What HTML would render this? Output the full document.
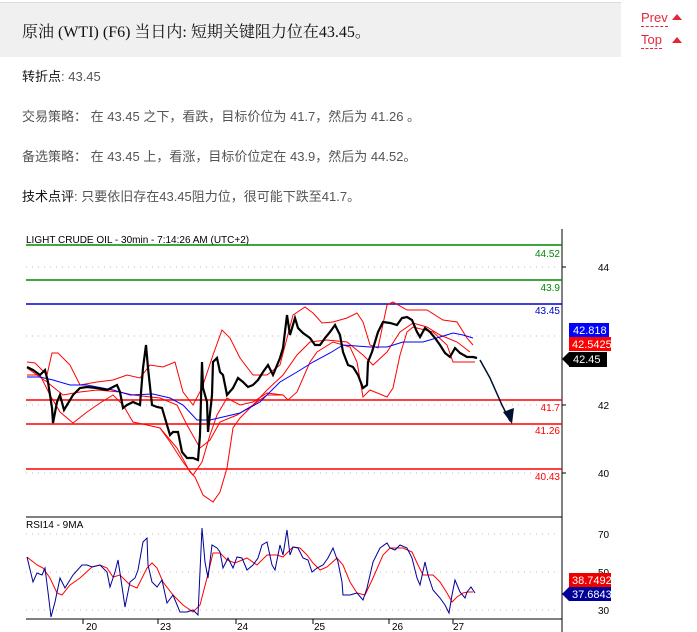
<!DOCTYPE html><html><head><meta charset="utf-8"><style>
body{margin:0;width:697px;height:632px;background:#fff;font-family:"Liberation Sans","Noto Sans CJK SC",sans-serif;position:relative;overflow:hidden}
.hd{position:absolute;left:0;top:2px;width:621px;height:54px;background:#f0f0f0;border-top:1px solid #ddd}
.hd span{position:absolute;left:22px;top:16px;font-size:16px;color:#111;font-family:"Liberation Serif","Noto Serif CJK SC",serif}
.nav{position:absolute;left:641px;font-size:13px;color:#e4263b;border-bottom:1px dashed #e4263b;line-height:16px}
.tri{position:absolute;left:672px;width:0;height:0;border-left:5px solid transparent;border-right:5px solid transparent;border-bottom:6px solid #e4263b}
.p{position:absolute;left:22px;font-size:13px;color:#555}
.p b{font-weight:normal;color:#111}
</style></head><body>
<div class="hd"><span>原油 (WTI) (F6) 当日内: 短期关键阻力位在43.45。</span></div>
<div class="nav" style="top:10px">Prev</div><div class="tri" style="top:14px"></div>
<div class="nav" style="top:32px">Top</div><div class="tri" style="top:37px"></div>
<div class="p" style="top:66px"><b>转折点</b>: 43.45</div>
<div class="p" style="top:106px">交易策略： 在 43.45 之下，看跌，目标价位为 41.7，然后为 41.26 。</div>
<div class="p" style="top:146px">备选策略： 在 43.45 上，看涨，目标价位定在 43.9，然后为 44.52。</div>
<div class="p" style="top:186px"><b>技术点评</b>: 只要依旧存在43.45阻力位，很可能下跌至41.7。</div>
<svg style="position:absolute;left:0;top:0" width="697" height="632" font-family="Liberation Sans,sans-serif">
<line x1="562" y1="229" x2="562" y2="632" stroke="#000"/>
<line x1="26" y1="517" x2="562" y2="517" stroke="#000"/>
<line x1="26" y1="619" x2="562" y2="619" stroke="#000"/>
<g stroke="#bbb" stroke-dasharray="1,5"><line x1="26" y1="267" x2="560" y2="267"/><line x1="26" y1="336" x2="560" y2="336"/><line x1="26" y1="405" x2="560" y2="405"/><line x1="26" y1="473" x2="560" y2="473"/><line x1="26" y1="534" x2="560" y2="534"/><line x1="26" y1="572" x2="560" y2="572"/><line x1="26" y1="610" x2="560" y2="610"/></g>
<text x="26" y="243" font-size="10" fill="#000">LIGHT CRUDE OIL - 30min - 7:14:26 AM (UTC+2)</text>
<line x1="26" y1="245" x2="562" y2="245" stroke="#080" stroke-width="1.5"/>
<line x1="26" y1="280" x2="562" y2="280" stroke="#080" stroke-width="1.5"/>
<line x1="26" y1="304" x2="562" y2="304" stroke="#00c" stroke-width="1.5"/>
<line x1="26" y1="400" x2="562" y2="400" stroke="#f00" stroke-width="1.5"/>
<line x1="26" y1="424" x2="562" y2="424" stroke="#f00" stroke-width="1.5"/>
<line x1="26" y1="469" x2="562" y2="469" stroke="#f00" stroke-width="1.5"/>
<g font-size="10" text-anchor="end"><text x="560" y="257" fill="#080">44.52</text><text x="560" y="291" fill="#080">43.9</text><text x="560" y="314" fill="#00c">43.45</text><text x="560" y="411" fill="#f00">41.7</text><text x="560" y="434" fill="#f00">41.26</text><text x="560" y="480" fill="#f00">40.43</text></g>
<g font-size="10" fill="#000"><text x="598" y="271">44</text><text x="598" y="409">42</text><text x="598" y="477">40</text><text x="598" y="538">70</text><text x="598" y="576">50</text><text x="598" y="614">30</text></g>
<g stroke="#000"><line x1="562" y1="267" x2="566" y2="267"/><line x1="562" y1="405" x2="566" y2="405"/><line x1="562" y1="473" x2="566" y2="473"/></g>
<g fill="none" stroke="#f00" stroke-width="1">
<polyline points="27,362 35,363 47,375 52,353 58,353 70,365 80,385 97,382 113,380 127,375 140,378 150,365 163,367 175,362 183,392 193,405 202,388 213,355 222,330 230,338 240,358 253,375 267,375 280,365 293,315 305,307 313,313 322,323 333,322 347,318 357,313 363,322 370,345 378,348 387,305 393,302 407,310 427,310 443,320 457,322 467,338 473,345"/>
<polyline points="27,375 40,375 50,395 60,412 73,423 87,412 100,403 113,395 123,405 133,422 147,425 160,428 170,442 183,462 193,475 202,462 210,435 217,415 227,398 240,405 253,402 267,393 283,395 288,400 297,392 310,362 317,352 333,342 350,347 357,362 363,397 370,390 387,397 393,388 400,355 407,332 413,327 433,332 447,345 453,362 463,362 475,362"/>
<polyline points="160,428 177,448 190,472 195,477 203,495 213,502 220,492 227,468 233,428 240,418 253,405 267,395 283,395"/>
<polyline points="27,368 47,382 63,395 80,392 97,390 120,392 133,395 160,398 177,405 187,425 200,448 210,440 220,422 237,415 253,405 267,390 283,375 297,355 310,342 327,340 347,342 363,355 373,365 387,352 400,332 413,323 427,327 440,335 457,342 470,352"/>
</g>
<polyline fill="none" stroke="#00f" stroke-width="1" points="27,377 40,377 53,380 70,385 87,385 113,390 130,395 153,394 170,398 183,405 197,420 210,420 223,417 240,413 260,402 280,382 297,372 313,362 330,353 343,345 370,347 387,347 403,342 423,342 440,337 453,333 463,335 473,338"/>
<polyline fill="none" stroke="#000" stroke-width="2.2" points="27,367 33,370 40,375 45,370 48,382 52,408 53,423 57,402 60,395 64,410 67,405 73,395 80,388 87,387 97,388 107,390 117,385 120,392 123,408 127,405 133,402 140,405 143,368 146,345 148,368 152,405 157,407 162,408 167,425 170,435 173,432 178,432 182,452 187,458 193,458 198,460 200,435 202,362 203,388 207,402 208,432 212,395 213,362 217,358 220,372 223,375 227,395 233,388 238,378 243,382 248,387 253,385 258,380 263,372 268,365 273,375 280,358 283,348 287,315 290,335 295,318 298,328 303,333 310,338 315,345 320,345 325,338 330,332 335,325 340,335 343,352 348,365 353,367 358,375 363,388 367,385 368,362 372,352 375,342 378,332 383,322 390,323 397,325 402,318 407,317 412,320 417,332 420,337 425,328 430,332 435,338 440,345 445,353 450,357 455,348 460,353 467,357 473,357 477,358"/>
<polyline fill="none" stroke="#013" stroke-width="1.5" points="480,360 490,378 502,405 510,421"/>
<polygon points="503,412 512,424 514,408" fill="#013"/>
<text x="26" y="528" font-size="10" fill="#000">RSI14 - 9MA</text>
<polyline fill="none" stroke="#f00" points="27,557 37,565 43,568 50,578 57,593 62,595 70,585 80,578 92,567 100,565 107,568 113,577 120,575 130,585 137,588 147,568 152,563 157,568 163,582 173,595 183,605 193,612 200,605 207,578 213,553 220,553 227,560 235,563 247,558 257,565 267,555 277,555 283,557 293,547 300,548 307,555 313,563 320,570 327,567 337,558 343,565 350,582 357,593 365,595 373,578 383,555 390,548 403,548 412,552 418,565 423,575 433,575 440,582 447,593 452,602 457,597 463,593 468,592 473,592"/>
<polyline fill="none" stroke="#009" points="27,557 33,582 37,573 42,575 45,568 48,592 51,617 55,602 60,578 65,588 73,575 82,565 87,565 92,567 100,565 107,572 110,587 115,572 118,560 120,573 125,607 130,582 135,578 138,570 143,542 147,538 148,565 152,582 157,587 162,580 167,603 173,595 180,612 187,612 193,610 198,615 202,528 205,562 208,578 212,545 217,548 220,552 223,568 228,558 233,568 237,557 242,558 247,570 253,565 258,558 262,545 267,542 272,565 275,570 280,545 283,555 287,530 290,555 293,547 298,548 303,558 308,560 312,572 317,568 323,565 328,558 333,548 338,562 342,582 343,595 350,595 357,593 363,600 367,588 373,562 380,548 387,543 390,548 395,550 400,545 407,548 412,558 417,578 420,585 425,562 428,575 433,590 440,598 445,605 449,613 452,595 455,580 460,592 465,598 467,592 471,587 475,593"/>
<rect x="569" y="323" width="40" height="14" fill="#00f"/><text x="573" y="334" font-size="11" fill="#fff">42.818</text>
<rect x="569" y="337" width="42" height="14" fill="#f00"/><text x="572" y="348" font-size="11" fill="#fff">42.5425</text>
<polygon points="562,359 569,352 586,352 586,366 569,366" fill="#000"/><rect x="569" y="352" width="38" height="15" fill="#000"/><text x="573" y="363" font-size="11" fill="#fff">42.45</text>
<rect x="569" y="573" width="42" height="14" fill="#e00"/><text x="572" y="584" font-size="11" fill="#fff">38.7492</text>
<polygon points="562,594 569,587 611,587 611,601 569,601" fill="#009"/><text x="572" y="598" font-size="11" fill="#fff">37.6843</text>
<g font-size="10" fill="#000"><text x="86" y="630">20</text><text x="160" y="630">23</text><text x="237" y="630">24</text><text x="314" y="630">25</text><text x="392" y="630">26</text><text x="453" y="630">27</text></g>
<g stroke="#000"><line x1="83" y1="619" x2="83" y2="624"/><line x1="158" y1="619" x2="158" y2="624"/><line x1="236" y1="619" x2="236" y2="624"/><line x1="313" y1="619" x2="313" y2="624"/><line x1="389" y1="619" x2="389" y2="624"/><line x1="453" y1="619" x2="453" y2="624"/></g>
</svg>
</body></html>
